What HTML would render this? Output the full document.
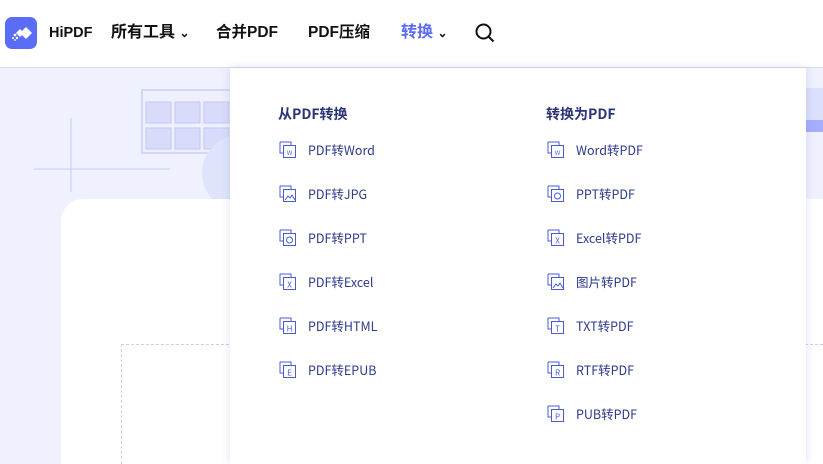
<!DOCTYPE html>
<html><head><meta charset="utf-8"><style>
*{margin:0;padding:0;box-sizing:border-box}
html,body{width:823px;height:464px;overflow:hidden}
body{background:#eff1fe;font-family:"Liberation Sans","Noto Sans CJK SC",sans-serif;position:relative}
.nav{position:absolute;left:0;top:0;width:823px;height:68px;background:#fff;border-bottom:1px solid #d8d9e6}
.nav .t{position:absolute;top:22px;font-size:16px;font-weight:bold;color:#111;line-height:22px;white-space:nowrap}
.card{position:absolute;left:61px;top:199px;width:762px;height:265px;background:#fff;border-radius:22px 0 0 0}
.dash{position:absolute;left:121px;top:344px;width:702px;height:120px;border-left:1px dashed #c9ccf5;border-top:1px dashed #c9ccf5}
.dd{position:absolute;left:230px;top:68px;width:576px;height:396px;background:#fff;box-shadow:0 0 8px rgba(120,130,200,.25)}
.h{position:absolute;font-family:"Noto Sans CJK SC",sans-serif;font-size:14px;font-weight:bold;color:#2b3476;top:36px;line-height:20px;white-space:nowrap}
.it{position:absolute;font-family:"Noto Sans CJK SC",sans-serif;font-size:12.5px;color:#2e3a8c;height:20px;line-height:20px;white-space:nowrap}
.it svg{position:absolute;left:-29px;top:1px}
</style></head><body>
<svg style="position:absolute;left:0;top:68px" width="240" height="140">
<line x1="71" y1="50" x2="71" y2="124" stroke="#c6cbf3"/>
<line x1="34" y1="101" x2="170" y2="101" stroke="#c6cbf3"/>
<rect x="142" y="22" width="100" height="63" fill="#eef0fd" stroke="#c9cef6" stroke-width="1.5"/>
<g fill="#d8dcfa" stroke="#c4c9f4"><rect x="146" y="34" width="25" height="21"/><rect x="175" y="34" width="25" height="21"/><rect x="204" y="34" width="25" height="21"/><rect x="146" y="60" width="25" height="21"/><rect x="175" y="60" width="25" height="21"/><rect x="204" y="60" width="25" height="21"/></g>
<circle cx="240" cy="105" r="38" fill="#dfe3fb"/>
</svg>
<div style="position:absolute;left:806px;top:88px;width:17px;height:44px;background:#dbe0fc"></div>
<div style="position:absolute;left:806px;top:120px;width:17px;height:12px;background:#a4aefc"></div>
<div class="card"></div><div class="dash"></div>
<div class="nav">
<svg style="position:absolute;left:5px;top:17px" width="32" height="32"><rect width="32" height="32" rx="7" fill="#5b6cf9"/><path d="M21 10l6 6-6 6-6-6z" fill="#fff"/><path d="M15 12l4 4-4 4-4-4z" fill="#fff"/><circle cx="10" cy="18" r="1.4" fill="#fff"/><circle cx="12" cy="21" r="1.2" fill="#fff"/><circle cx="8" cy="21" r="1" fill="#fff"/><circle cx="10" cy="23" r="0.9" fill="#fff"/></svg>
<span class="t" style="left:49px;font-size:14.5px">HiPDF</span>
<span class="t" style="left:111px">所有工具 <span style="font-size:12px">⌄</span></span>
<span class="t" style="left:216px;font-size:15.5px">合并PDF</span>
<span class="t" style="left:308px;font-size:15.5px">PDF压缩</span>
<span class="t" style="left:401px;color:#5a6af5">转换 <span style="font-size:12px;color:#111">⌄</span></span>
<svg style="position:absolute;left:475px;top:23px" width="20" height="20"><circle cx="8.5" cy="8.5" r="7" fill="none" stroke="#111" stroke-width="2"/><line x1="13.5" y1="13.5" x2="18.5" y2="18.5" stroke="#111" stroke-width="2"/></svg>
</div>
<div class="dd">
<div class="h" style="left:48px">从PDF转换</div>
<div class="h" style="left:316px">转换为PDF</div>
</div>
<div style="position:absolute;left:230px;top:68px">
<div class="it" style="left:78px;top:72px"><svg width="18" height="18"><path d="M1 1h11v3M1 1v11h3" fill="none" stroke="#4b5bd6"/><rect x="4.5" y="4.5" width="12" height="12" fill="none" stroke="#4b5bd6"/><text x="10.5" y="14" font-size="6" fill="#4b5bd6" text-anchor="middle">W</text></svg>PDF转Word</div>
<div class="it" style="left:78px;top:116px"><svg width="18" height="18"><path d="M1 1h11v3M1 1v11h3" fill="none" stroke="#4b5bd6"/><rect x="4.5" y="4.5" width="12" height="12" fill="none" stroke="#4b5bd6"/><path d="M6 15l3-4 2 2 2-3 3 5" fill="none" stroke="#4b5bd6"/></svg>PDF转JPG</div>
<div class="it" style="left:78px;top:160px"><svg width="18" height="18"><path d="M1 1h11v3M1 1v11h3" fill="none" stroke="#4b5bd6"/><rect x="4.5" y="4.5" width="12" height="12" fill="none" stroke="#4b5bd6"/><circle cx="10.5" cy="11" r="3" fill="none" stroke="#4b5bd6"/></svg>PDF转PPT</div>
<div class="it" style="left:78px;top:204px"><svg width="18" height="18"><path d="M1 1h11v3M1 1v11h3" fill="none" stroke="#4b5bd6"/><rect x="4.5" y="4.5" width="12" height="12" fill="none" stroke="#4b5bd6"/><text x="10.5" y="14.5" font-size="8" fill="#4b5bd6" text-anchor="middle">X</text></svg>PDF转Excel</div>
<div class="it" style="left:78px;top:248px"><svg width="18" height="18"><path d="M1 1h11v3M1 1v11h3" fill="none" stroke="#4b5bd6"/><rect x="4.5" y="4.5" width="12" height="12" fill="none" stroke="#4b5bd6"/><text x="10.5" y="14.5" font-size="8" fill="#4b5bd6" text-anchor="middle">H</text></svg>PDF转HTML</div>
<div class="it" style="left:78px;top:292px"><svg width="18" height="18"><path d="M1 1h11v3M1 1v11h3" fill="none" stroke="#4b5bd6"/><rect x="4.5" y="4.5" width="12" height="12" fill="none" stroke="#4b5bd6"/><text x="10.5" y="14.5" font-size="8" fill="#4b5bd6" text-anchor="middle">E</text></svg>PDF转EPUB</div>
<div class="it" style="left:346px;top:72px"><svg width="18" height="18"><path d="M1 1h11v3M1 1v11h3" fill="none" stroke="#4b5bd6"/><rect x="4.5" y="4.5" width="12" height="12" fill="none" stroke="#4b5bd6"/><text x="10.5" y="14" font-size="6" fill="#4b5bd6" text-anchor="middle">W</text></svg>Word转PDF</div>
<div class="it" style="left:346px;top:116px"><svg width="18" height="18"><path d="M1 1h11v3M1 1v11h3" fill="none" stroke="#4b5bd6"/><rect x="4.5" y="4.5" width="12" height="12" fill="none" stroke="#4b5bd6"/><circle cx="10.5" cy="11" r="3" fill="none" stroke="#4b5bd6"/></svg>PPT转PDF</div>
<div class="it" style="left:346px;top:160px"><svg width="18" height="18"><path d="M1 1h11v3M1 1v11h3" fill="none" stroke="#4b5bd6"/><rect x="4.5" y="4.5" width="12" height="12" fill="none" stroke="#4b5bd6"/><text x="10.5" y="14.5" font-size="8" fill="#4b5bd6" text-anchor="middle">X</text></svg>Excel转PDF</div>
<div class="it" style="left:346px;top:204px"><svg width="18" height="18"><path d="M1 1h11v3M1 1v11h3" fill="none" stroke="#4b5bd6"/><rect x="4.5" y="4.5" width="12" height="12" fill="none" stroke="#4b5bd6"/><path d="M6 15l3-4 2 2 2-3 3 5" fill="none" stroke="#4b5bd6"/></svg>图片转PDF</div>
<div class="it" style="left:346px;top:248px"><svg width="18" height="18"><path d="M1 1h11v3M1 1v11h3" fill="none" stroke="#4b5bd6"/><rect x="4.5" y="4.5" width="12" height="12" fill="none" stroke="#4b5bd6"/><text x="10.5" y="14.5" font-size="8" fill="#4b5bd6" text-anchor="middle">T</text></svg>TXT转PDF</div>
<div class="it" style="left:346px;top:292px"><svg width="18" height="18"><path d="M1 1h11v3M1 1v11h3" fill="none" stroke="#4b5bd6"/><rect x="4.5" y="4.5" width="12" height="12" fill="none" stroke="#4b5bd6"/><text x="10.5" y="14.5" font-size="8" fill="#4b5bd6" text-anchor="middle">R</text></svg>RTF转PDF</div>
<div class="it" style="left:346px;top:336px"><svg width="18" height="18"><path d="M1 1h11v3M1 1v11h3" fill="none" stroke="#4b5bd6"/><rect x="4.5" y="4.5" width="12" height="12" fill="none" stroke="#4b5bd6"/><text x="10.5" y="14.5" font-size="8" fill="#4b5bd6" text-anchor="middle">P</text></svg>PUB转PDF</div>
</div>
</body></html>
